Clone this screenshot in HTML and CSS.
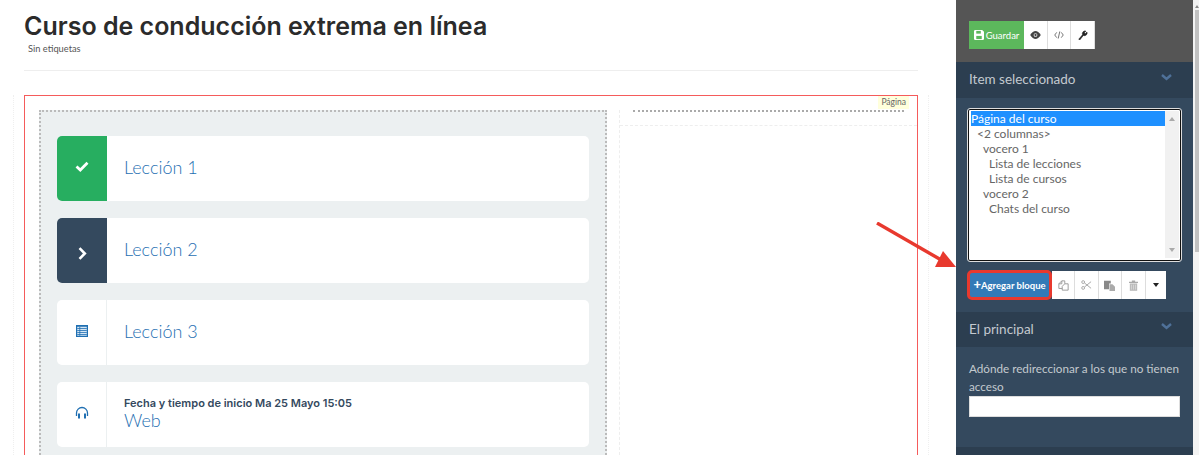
FILE: index.html
```html
<!DOCTYPE html>
<html lang="es">
<head>
  <meta charset="UTF-8">
  <title>Curso de conducción extrema en línea</title>
  <link rel="stylesheet" href="styles.css">
</head>
<body>
  <div class="content">
    <h1>Curso de conducción extrema en línea</h1>
    <p class="tags">Sin etiquetas</p>
    <hr class="divider">

    <div class="page-outer">
      <div class="page-frame">
        <span class="page-label">Página</span>
        <div class="columns">
          <div class="col-left">
            <div class="lesson">
              <div class="lesson-icon done">
                <svg class="up-2" width="14" height="11" viewBox="0 0 14 11"><path d="M1.500 5.500l3.800 3.500L12.500 1.800" fill="none" stroke="#fff" stroke-width="2.800"/></svg>
              </div>
              <div class="lesson-body"><a class="lesson-title">Lección 1</a></div>
            </div>
            <div class="lesson">
              <div class="lesson-icon current">
                <svg class="down-2" width="9" height="13" viewBox="0 0 9 13"><path d="M1.500 1.200L6.800 6.500 1.500 11.800" fill="none" stroke="#fff" stroke-width="2.600"/></svg>
              </div>
              <div class="lesson-body"><a class="lesson-title">Lección 2</a></div>
            </div>
            <div class="lesson">
              <div class="lesson-icon">
                <svg class="up-2" width="12" height="12" viewBox="0 0 12 12"><rect width="12" height="12" fill="#1f6fb2"/><path d="M1.200 1.800h9.600v9H1.200z" fill="#d5e6f4"/><path d="M1.200 3.500h9.600M1.200 5.500h9.600M1.200 7.500h9.600M1.200 9.500h9.600M3.800 1.800v9" stroke="#1f6fb2" stroke-width=".8"/></svg>
              </div>
              <div class="lesson-body"><a class="lesson-title">Lección 3</a></div>
            </div>
            <div class="lesson">
              <div class="lesson-icon">
                <svg class="up-2" width="14" height="13" viewBox="0 0 14 13"><path d="M1.500 10V7a5.500 5.500 0 0 1 11 0v3" fill="none" stroke="#1f6fb2" stroke-width="1.300"/><rect x="3" y="7.500" width="2" height="5" fill="#1f6fb2"/><rect x="9" y="7.500" width="2" height="5" fill="#1f6fb2"/></svg>
              </div>
              <div class="lesson-body">
                <p class="lesson-date">Fecha y tiempo de inicio Ma 25 Mayo 15:05</p>
                <a class="lesson-title">Web</a>
              </div>
            </div>
          </div>
          <div class="col-right">
            <div class="col-right-top"><div class="dots"></div></div>
          </div>
        </div>
      </div>
    </div>
  </div>

  <div class="sidebar">
    <div class="top-tools">
      <button class="btn-save">
        <svg width="10" height="10" viewBox="0 0 11 11"><path d="M0 1.500A1.500 1.500 0 0 1 1.500 0H9l2 2v7.500A1.500 1.500 0 0 1 9.500 11h-8A1.500 1.500 0 0 1 0 9.500z" fill="#fff"/><rect x="2.500" y="1" width="5" height="3" fill="#5cb85c"/><rect x="2.500" y="6.500" width="6" height="3.500" fill="#5cb85c"/></svg>
        Guardar
      </button>
      <button class="tool">
        <svg width="11" height="8" viewBox="0 0 12 9"><path d="M0 4.500C2 1.200 4 0 6 0s4 1.200 6 4.500C10 7.800 8 9 6 9S2 7.800 0 4.500z" fill="#444"/><circle cx="6" cy="4.500" r="2.100" fill="#fff"/><circle cx="6" cy="4.500" r="1.300" fill="#444"/></svg>
      </button>
      <button class="tool">
        <svg width="10" height="8" viewBox="0 0 11 9"><path d="M3 1.500L.7 4.500 3 7.500M8 1.500l2.300 3L8 7.500M6.400.5L4.600 8.500" fill="none" stroke="#666" stroke-width="1"/></svg>
      </button>
      <button class="tool">
        <svg width="10" height="10" viewBox="0 0 11 11"><path d="M.8 10.200L5 5.200a3 3 0 0 1 3.800-4L7 3l1 1 1.900-1.800a3 3 0 0 1-4 3.800l-4 5z" fill="#222" stroke="#222" stroke-width=".6"/></svg>
      </button>
    </div>

    <div class="panel-head first">
      <span>Item seleccionado</span>
      <svg class="chevron" width="11" height="7" viewBox="0 0 11 7"><path d="M1 1l4.500 4L10 1" fill="none" stroke="#4f7199" stroke-width="2.400"/></svg>
    </div>
    <div class="panel-body first">
      <div class="tree">
        <ul class="tree-list">
          <li class="selected">Página del curso</li>
          <li class="lvl1">&lt;2 columnas&gt;</li>
          <li class="lvl2">vocero 1</li>
          <li class="lvl3">Lista de lecciones</li>
          <li class="lvl3">Lista de cursos</li>
          <li class="lvl2">vocero 2</li>
          <li class="lvl3">Chats del curso</li>
        </ul>
        <div class="tree-scroll">
          <span class="scroll-up"></span>
          <span class="scroll-down"></span>
        </div>
      </div>
      <div class="block-tools">
        <button class="btn-add"><b>+</b>Agregar bloque</button>
        <button class="tool small">
          <svg width="11" height="11" viewBox="0 0 13 13"><path d="M1 4.500L4.500 1H8v3.500M4.500 1v3.500H1V10h4M5 12V7.500L8 4.500h4V12z" fill="none" stroke="#999" stroke-width="1.100"/></svg>
        </button>
        <button class="tool small">
          <svg width="11" height="10" viewBox="0 0 13 12"><circle cx="2.500" cy="2.500" r="1.700" fill="none" stroke="#aaa" stroke-width="1.200"/><circle cx="2.500" cy="9.500" r="1.700" fill="none" stroke="#aaa" stroke-width="1.200"/><path d="M4 3.500l8 6.500M4 8.500l8-6.500" stroke="#aaa" stroke-width="1.200"/></svg>
        </button>
        <button class="tool small">
          <svg width="11" height="11" viewBox="0 0 13 13"><path d="M0 1h8v3H6v7H0z" fill="#888"/><path d="M6.500 5h3.500l3 3v5H6.500z" fill="#aaa"/></svg>
        </button>
        <button class="tool small">
          <svg width="9" height="11" viewBox="0 0 11 13"><path d="M0 2h11v1.500H0zM3.500 2V.5h4V2" fill="#aaa"/><path d="M1 4h9v9H1z" fill="#bbb"/><path d="M3 5.500v6M5.500 5.500v6M8 5.500v6" stroke="#e2e2e2" stroke-width=".8"/></svg>
        </button>
        <button class="tool small caret-btn"><span class="caret"></span></button>
      </div>
    </div>

    <div class="panel-head second">
      <span>El principal</span>
      <svg class="chevron" width="11" height="7" viewBox="0 0 11 7"><path d="M1 1l4.500 4L10 1" fill="none" stroke="#4f7199" stroke-width="2.400"/></svg>
    </div>
    <div class="panel-body second">
      <label class="field-label" for="redirect">Adónde redireccionar a los que no tienen acceso</label>
      <input class="field" id="redirect" type="text">
    </div>
    <div class="panel-head last"></div>
  </div>

  <div class="page-scroll">
    <span class="page-scroll-up"></span>
    <div class="page-scroll-thumb"></div>
  </div>

  <svg class="arrow" width="90" height="56" viewBox="0 0 90 56"><path d="M1 1l66 38" stroke="#e8392e" stroke-width="3.400" fill="none"/><path d="M80 45H59l8-16z" fill="#e8392e"/></svg>
</body>
</html>
```

FILE: styles.css
```css
html {
  overflow: hidden;
}

body {
  margin: 0;
  height: 455px;
  overflow: hidden;
  display: flex;
  background-color: white;
  font-family: Lato, "Open Sans", sans-serif;
  color: #333;
}

button {
  font-family: inherit;
  cursor: pointer;
}

/* left side */
.content {
  width: 956px;
  height: 455px;
  overflow: hidden;
  flex-shrink: 0;
  box-sizing: border-box;
  padding: 11px 38px 0 24px;
}

h1 {
  margin: 0;
  font-family: Inter, sans-serif;
  font-size: 25px;
  line-height: 30px;
  font-weight: 600;
  color: #2b2b2b;
}

.tags {
  margin: 2px 0 0 4px;
  font-size: 9.300px;
  line-height: 12px;
  color: #555;
}

.divider {
  margin: 15px 0 24px;
  border: none;
  border-top: 1px solid #eee;
}

.page-outer {
  margin: 0 -11px;
  padding: 0 10px;
  border-left: 1px dotted #efefef;
  border-right: 1px dotted #efefef;
}

.page-frame {
  position: relative;
  height: 360px;
  box-sizing: border-box;
  border: 1px solid #f55b5b;
  border-bottom: none;
  padding: 14px 0 0 14px;
}

.page-label {
  position: absolute;
  top: 0;
  right: 8px;
  padding: 0 3px;
  background-color: #ffffdc;
  font-size: 8.500px;
  line-height: 13px;
  color: #666;
}

.columns {
  display: flex;
  gap: 12px;
  height: 100%;
}

.col-left {
  width: 568px;
  box-sizing: border-box;
  border: 2px dotted #bbb;
  border-bottom: none;
  background-color: #ecf0f1;
  padding: 24px 16px 0;
  display: flex;
  flex-direction: column;
  gap: 17px;
}

.lesson {
  display: flex;
  height: 65px;
  flex-shrink: 0;
  background-color: white;
  border-radius: 5px;
  overflow: hidden;
}

.lesson-icon {
  width: 50px;
  flex-shrink: 0;
  box-sizing: border-box;
  border-right: 1px solid #ecf0f1;
  display: flex;
  align-items: center;
  justify-content: center;
}

.up-2 {
  margin-bottom: 4px;
}

.down-2 {
  margin-top: 5px;
}

.lesson-icon.done {
  background-color: #27ae60;
  border-right: none;
}

.lesson-icon.current {
  background-color: #34495e;
  border-right: none;
}

.lesson-body {
  padding: 0 0 3px 17px;
  display: flex;
  flex-direction: column;
  justify-content: center;
}

.lesson-title {
  font-size: 18px;
  line-height: 20px;
  font-weight: 300;
  color: #1f6fb2;
}

.lesson-date {
  margin: 0;
  font-family: Inter, sans-serif;
  font-size: 11px;
  line-height: 14px;
  font-weight: 600;
  color: #34495e;
}

.col-right {
  flex: 1;
  border-left: 1px dashed #eee;
}

.col-right-top {
  height: 15px;
  border-bottom: 1px dashed #eee;
  padding: 0 13px;
}

.dots {
  border-top: 2px dotted #aaa;
}

/* right side */
.sidebar {
  width: 237px;
  height: 455px;
  overflow: hidden;
  flex-shrink: 0;
  background-color: #34495e;
}

.top-tools {
  height: 62px;
  box-sizing: border-box;
  background-color: #555;
  padding: 21px 0 0 13px;
  display: flex;
}

.btn-save {
  width: 55px;
  height: 28px;
  padding: 0;
  border: none;
  background-color: #5cb85c;
  color: white;
  font-size: 9.500px;
  display: flex;
  align-items: center;
  justify-content: center;
  gap: 2px;
}

.tool {
  width: 23.700px;
  height: 28px;
  padding: 0;
  border: none;
  border-right: 1px solid #ddd;
  background-color: white;
  display: flex;
  align-items: center;
  justify-content: center;
}

.panel-head {
  box-sizing: border-box;
  padding: 0 21px 2px 13px;
  background-color: #2c3e50;
  display: flex;
  align-items: center;
  justify-content: space-between;
  font-size: 13.500px;
  color: #c3c9cf;
}

.panel-head.first {
  height: 36px;
}

.panel-head.second {
  height: 35px;
}

.panel-head.last {
  height: 8px;
}

.chevron {
  margin-bottom: 4px;
}

.panel-body.first {
  height: 214px;
  box-sizing: border-box;
  padding: 11px 12px 0;
}

.tree {
  height: 152px;
  box-sizing: border-box;
  border: 1px solid #111;
  outline: 1px solid #ddd;
  border-radius: 2px;
  background-color: white;
  padding: 1px 1px 2px 2px;
  display: flex;
}

.tree-list {
  flex: 1;
  margin: 0;
  padding: 0;
  list-style: none;
  font-size: 12px;
  line-height: 15px;
  color: #666;
}

.selected {
  background-color: #1e90ff;
  color: white;
}

.lvl1 {
  padding-left: 6px;
}

.lvl2 {
  padding-left: 12px;
}

.lvl3 {
  padding-left: 18px;
}

.tree-scroll {
  width: 14px;
  background-color: #f1f1f1;
  display: flex;
  flex-direction: column;
  justify-content: space-between;
  align-items: center;
  padding: 6px 0;
  box-sizing: border-box;
}

.scroll-up {
  border: 3px solid transparent;
  border-top: none;
  border-bottom: 4px solid #aaa;
}

.scroll-down {
  border: 3px solid transparent;
  border-bottom: none;
  border-top: 4px solid #aaa;
}

.block-tools {
  margin-top: 9px;
  display: flex;
  align-items: center;
}

.btn-add {
  width: 85px;
  height: 30px;
  margin-left: -1px;
  padding: 0;
  box-sizing: border-box;
  border: 3px solid #e8392e;
  border-radius: 5px;
  background-color: #337ab7;
  color: white;
  font-size: 9.500px;
  font-weight: 700;
  white-space: nowrap;
}

.btn-add b {
  font-size: 13px;
  line-height: 10px;
}

.tool.small {
  width: 23.400px;
  height: 27.500px;
}

.tool.small:last-child {
  width: 20px;
  border-right: none;
}

.caret {
  border: 3.500px solid transparent;
  border-bottom: none;
  border-top: 4px solid #222;
}

.panel-body.second {
  height: 100px;
  box-sizing: border-box;
  padding: 13px 13px 0;
}

.field-label {
  display: block;
  font-size: 11.700px;
  line-height: 17.500px;
  color: #c3c9cf;
}

.field {
  display: block;
  width: 100%;
  height: 21px;
  margin-top: 1px;
  box-sizing: border-box;
  border: 1px solid #ddd;
  background-color: white;
}

.page-scroll {
  flex: 1;
  background-color: #f3f3f3;
  padding: 5px 0 0 2px;
}

.page-scroll-up {
  display: block;
  width: 0;
  margin: 0 auto 2px;
  border: 2px solid transparent;
  border-top: none;
  border-bottom: 3px solid #888;
}

.page-scroll-thumb {
  height: 242px;
  background-color: #c1c1c1;
}

.arrow {
  position: absolute;
  left: 876px;
  top: 222px;
}
```
